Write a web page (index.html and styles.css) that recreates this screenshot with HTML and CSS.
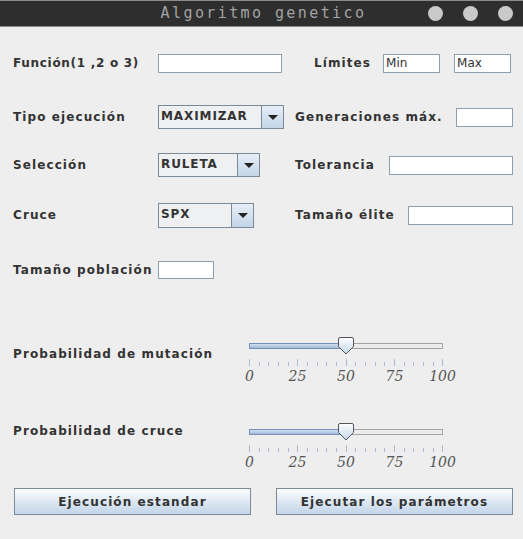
FILE: index.html
```html
<!DOCTYPE html>
<html lang="es">
  <head>
    <meta charset="UTF-8" />
    <title>Algoritmo genetico</title>
    <link rel="stylesheet" href="styles.css">
  </head>
  <body>
    <div class="window">
      <div class="titlebar">
        <span></span>
        <span class="title">Algoritmo genetico</span>
        <span class="dots"><i></i><i></i><i></i></span>
      </div>

      <div class="content">
        <div class="row row-func">
          <span class="lbl lbl-func">Función(1 ,2 o 3)</span>
          <input class="field w-func" type="text" />
          <span class="rlbl limites">Límites</span>
          <input class="field w-lim" type="text" value="Min" />
          <input class="field w-lim" type="text" value="Max" />
        </div>

        <div class="row row-tipo">
          <span class="lbl">Tipo ejecución</span>
          <div class="combo w-tipo">
            <span class="combo-text">MAXIMIZAR</span>
            <span class="combo-btn"></span>
          </div>
          <span class="rlbl gen">Generaciones máx.</span>
          <input class="field w-gen" type="text" />
        </div>

        <div class="row row-sel">
          <span class="lbl">Selección</span>
          <div class="combo w-sel">
            <span class="combo-text">RULETA</span>
            <span class="combo-btn"></span>
          </div>
          <span class="rlbl tol">Tolerancia</span>
          <input class="field w-tol" type="text" />
        </div>

        <div class="row row-cruce">
          <span class="lbl">Cruce</span>
          <div class="combo w-cruce">
            <span class="combo-text">SPX</span>
            <span class="combo-btn"></span>
          </div>
          <span class="rlbl elite">Tamaño élite</span>
          <input class="field w-elite" type="text" />
        </div>

        <div class="row row-pob">
          <span class="lbl">Tamaño población</span>
          <input class="field w-pob" type="text" />
        </div>

        <!-- sliders -->
        <div class="slider-row slider-mut">
          <span class="slbl">Probabilidad de mutación</span>
          <svg class="slider" width="225" height="50" viewBox="0 0 225 50">
            <defs>
              <linearGradient id="fillA" x1="0" y1="0" x2="0" y2="1">
                <stop offset="0" stop-color="#d6e3f1" />
                <stop offset="1" stop-color="#9db7d6" />
              </linearGradient>
              <linearGradient id="thumbA" x1="0" y1="0" x2="0" y2="1">
                <stop offset="0" stop-color="#ffffff" />
                <stop offset="1" stop-color="#c2d5ea" />
              </linearGradient>
            </defs>
            <rect x="9.5" y="8.5" width="193" height="5" fill="#ececec" stroke="#a3a3a3" />
            <rect x="9.5" y="8.5" width="97" height="5" fill="url(#fillA)" stroke="#7391b9" />
            <path class="ticks" d="M9.5 24v7M19.5 27v4M28.5 27v4M38.5 27v4M48.5 27v4M57.5 24v7M67.5 27v4M77.5 27v4M86.5 27v4M96.5 27v4M106.5 24v7M115.5 27v4M125.5 27v4M135.5 27v4M144.5 27v4M154.5 24v7M164.5 27v4M173.5 27v4M183.5 27v4M193.5 27v4M202.5 24v7" />
            <path d="M98.5 4 Q98.5 2.5 100 2.5 H112 Q113.5 2.5 113.5 4 V11.5 L106 19 L98.5 11.5 Z" fill="url(#thumbA)" stroke="#50565c" />
            <text class="tick-lbl" x="9.5" y="46">0</text>
            <text class="tick-lbl" x="57.5" y="46">25</text>
            <text class="tick-lbl" x="106" y="46">50</text>
            <text class="tick-lbl" x="154.5" y="46">75</text>
            <text class="tick-lbl" x="202.5" y="46">100</text>
          </svg>
        </div>

        <div class="slider-row slider-cruce">
          <span class="slbl">Probabilidad de cruce</span>
          <svg class="slider" width="225" height="50" viewBox="0 0 225 50">
            <defs>
              <linearGradient id="fillB" x1="0" y1="0" x2="0" y2="1">
                <stop offset="0" stop-color="#d6e3f1" />
                <stop offset="1" stop-color="#9db7d6" />
              </linearGradient>
              <linearGradient id="thumbB" x1="0" y1="0" x2="0" y2="1">
                <stop offset="0" stop-color="#ffffff" />
                <stop offset="1" stop-color="#c2d5ea" />
              </linearGradient>
            </defs>
            <rect x="9.5" y="8.5" width="193" height="5" fill="#ececec" stroke="#a3a3a3" />
            <rect x="9.5" y="8.5" width="97" height="5" fill="url(#fillB)" stroke="#7391b9" />
            <path class="ticks" d="M9.5 24v7M19.5 27v4M28.5 27v4M38.5 27v4M48.5 27v4M57.5 24v7M67.5 27v4M77.5 27v4M86.5 27v4M96.5 27v4M106.5 24v7M115.5 27v4M125.5 27v4M135.5 27v4M144.5 27v4M154.5 24v7M164.5 27v4M173.5 27v4M183.5 27v4M193.5 27v4M202.5 24v7" />
            <path d="M98.5 4 Q98.5 2.5 100 2.5 H112 Q113.5 2.5 113.5 4 V11.5 L106 19 L98.5 11.5 Z" fill="url(#thumbB)" stroke="#50565c" />
            <text class="tick-lbl" x="9.5" y="46">0</text>
            <text class="tick-lbl" x="57.5" y="46">25</text>
            <text class="tick-lbl" x="106" y="46">50</text>
            <text class="tick-lbl" x="154.5" y="46">75</text>
            <text class="tick-lbl" x="202.5" y="46">100</text>
          </svg>
        </div>

        <div class="buttons">
          <button type="button" class="btn">Ejecución estandar</button>
          <button type="button" class="btn">Ejecutar los parámetros</button>
        </div>
      </div>
    </div>
  </body>
</html>
```

FILE: styles.css
```css
body {
    margin: 0;
    background: #eeeeee;
    font-family: "DejaVu Sans", sans-serif;
    font-size: 12px;
    color: #333;
}
.window {
    width: 523px;
    height: 539px;
    background: #eeeeee;
}
.titlebar {
    display: grid;
    grid-template-columns: 1fr auto 1fr;
    align-items: center;
    height: 25px;
    background: #2e2e2e;
    border-top: 1px solid #8a8a8a;
    border-bottom: 1px solid #8a8a8a;
}
.title {
    font-family: "DejaVu Sans Mono", monospace;
    font-size: 15px;
    letter-spacing: 2.4px;
    color: #a3a3a3;
    margin-top: -2px;
    margin-left: 4px;
}
.dots {
    display: flex;
    justify-content: flex-end;
    gap: 20px;
    padding-right: 10px;
}
.dots i {
    width: 15px;
    height: 15px;
    border-radius: 50%;
    background: #c9c9c9;
}
.content {
    padding: 0 10px 0 13px;
}
.row {
    display: flex;
    align-items: center;
    height: 26px;
}
.row-func { margin-top: 23px; }
.row-tipo { margin-top: 28px; }
.row-sel { margin-top: 22px; }
.row-cruce { margin-top: 24px; }
.row-pob { margin-top: 29px; }
.lbl, .rlbl, .slbl, .combo-text, .btn {
    font-weight: bold;
    letter-spacing: 1.1px;
    white-space: nowrap;
}
.lbl {
    width: 145px;
    flex: none;
}
.lbl.lbl-func {
    letter-spacing: 0.7px;
}
.field {
    box-sizing: border-box;
    height: 19px;
    margin: 0;
    padding: 0 2px;
    border: 1px solid #8e9eaf;
    background: #fff;
    font-family: "DejaVu Sans", sans-serif;
    font-size: 12px;
    color: #333;
    flex: none;
}
.w-func { width: 124px; }
.limites { margin-left: 32px; }
.w-lim { width: 57px; margin-left: 12px; }
.w-lim + .w-lim { margin-left: 14px; }
.w-gen { width: 57px; margin-left: auto; }
.w-tol { width: 124px; margin-left: auto; }
.w-elite { width: 105px; margin-left: auto; }
.w-pob { width: 56px; height: 18px; }
.gen { margin-left: 11px; }
.tol { margin-left: 35px; }
.elite { margin-left: 41px; }
.combo {
    box-sizing: border-box;
    display: flex;
    height: 24px;
    border: 1px solid #7a8a99;
    background: #eef0f2;
    flex: none;
}
.w-tipo { width: 126px; }
.w-sel { width: 102px; }
.w-cruce { width: 96px; height: 25px; }
.combo-text {
    flex: 1;
    padding: 3px 0 0 2px;
    color: #333;
    letter-spacing: 0.9px;
}
.combo-btn {
    width: 21px;
    border-left: 1px solid #7a8a99;
    background: linear-gradient(#e6eef7, #c3d5e9);
    display: flex;
    align-items: center;
    justify-content: center;
}
.combo-btn::after {
    content: "";
    border-left: 5px solid transparent;
    border-right: 5px solid transparent;
    border-top: 5px solid #222;
}
.slider-row {
    display: flex;
    align-items: flex-start;
}
.slider-mut { margin-top: 52px; }
.slider-cruce { margin-top: 36px; }
.slbl {
    width: 227px;
    flex: none;
    line-height: 15px;
}
.slider-mut .slbl { margin-top: 12px; }
.slider-cruce .slbl { margin-top: 3px; }
.slider {
    display: block;
    flex: none;
}
.ticks {
    stroke: #a9bccf;
    stroke-width: 1;
}
.tick-lbl {
    font-family: "DejaVu Serif", serif;
    font-style: italic;
    font-size: 14px;
    fill: #555;
    text-anchor: middle;
}
.buttons {
    display: flex;
    justify-content: space-between;
    margin-top: 17px;
    padding-left: 1px;
}
.btn {
    box-sizing: border-box;
    width: 237px;
    height: 27px;
    border: 1px solid #7a8a99;
    background: linear-gradient(#fdfdfd, #dbe6f2 55%, #c3d5e9);
    font-family: "DejaVu Sans", sans-serif;
    font-size: 12px;
    color: #333;
    padding: 0;
}
```
